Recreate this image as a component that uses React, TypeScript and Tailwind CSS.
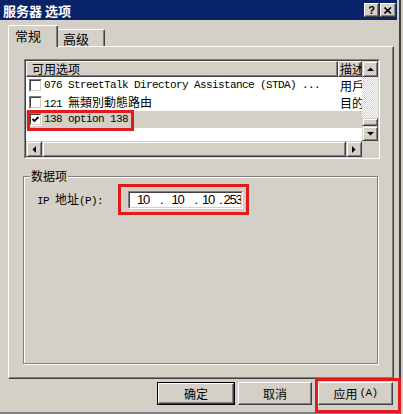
import React from "react";

// classic win32 bevels
const raised =
  "border border-t-white border-l-white border-r-[#404040] border-b-[#404040] shadow-[inset_-1px_-1px_0_#808080]";
const scrollBtn =
  "flex items-center justify-center bg-[#d4d0c8] border border-t-[#d4d0c8] border-l-[#d4d0c8] border-r-[#404040] border-b-[#404040] shadow-[inset_1px_1px_0_#ffffff,inset_-1px_-1px_0_#808080]";
const hatch =
  "bg-[image:repeating-conic-gradient(#ffffff_0%_25%,#d4d0c8_0%_50%)] bg-[length:2px_2px]";
const mono = "font-['Liberation_Mono',monospace] text-[11px] tracking-[-0.6px]";
const han = "font-['Noto_Sans_CJK_TC','Noto_Sans_CJK_SC',sans-serif] text-[12px] tracking-normal";

function Arrow({ dir }: { dir: "up" | "down" | "left" | "right" }) {
  const pts = {
    up: "0,4 7,4 3.5,0.5",
    down: "0,0 7,0 3.5,3.5",
    left: "4,0 4,7 0.5,3.5",
    right: "0,0 0,7 3.5,3.5",
  }[dir];
  const vertical = dir === "up" || dir === "down";
  return (
    <svg width={vertical ? 7 : 4} height={vertical ? 4 : 7} viewBox={vertical ? "0 0 7 4" : "0 0 4 7"}>
      <polygon points={pts} fill="#000" />
    </svg>
  );
}

function Check({ on }: { on?: boolean }) {
  return (
    <div className="h-[13px] w-[13px] shrink-0 border border-t-[#808080] border-l-[#808080] border-r-white border-b-white">
      <div className="h-full w-full border border-t-[#404040] border-l-[#404040] border-r-[#d4d0c8] border-b-[#d4d0c8] bg-white">
        {on && (
          <svg width="9" height="9" viewBox="0 0 9 9">
            <polyline points="1.5,4 3.5,6 7.5,2" fill="none" stroke="#000" strokeWidth="1.8" />
          </svg>
        )}
      </div>
    </div>
  );
}

const ROWS = [
  { code: "076 StreetTalk Directory Assistance (STDA) ...", desc: "用戶類別", sel: false },
  { code: "121 ", cjk: "無類別動態路由", desc: "目的地", sel: false },
  { code: "138 option 138", desc: "", sel: true, on: true },
];

export default function App() {
  return (
    <div className="h-[414px] w-[403px] bg-[#d4d0c8] pr-[2px] font-['Noto_Sans_CJK_SC',sans-serif] text-[12px] text-black">
      <div className="relative flex h-full w-[401px] flex-col border-r-2 border-b-2 border-r-[#404040] border-b-[#808080]">
        {/* title bar */}
        <div className="mr-[2px] flex h-[20px] shrink-0 items-center justify-between bg-[#0a246a] pl-[3px] pr-[1px]">
          <span className="text-[13px] font-bold leading-none text-white">服务器 选项</span>
          <div className="flex gap-[1px]">
            <div className={`${raised} flex h-[14px] w-[15px] items-center justify-center bg-[#d4d0c8] font-['Liberation_Sans',sans-serif] text-[11px] font-bold leading-none`}>
              ?
            </div>
            <div className={`${raised} flex h-[14px] w-[16px] items-center justify-center bg-[#d4d0c8]`}>
              <svg width="8" height="7" viewBox="0 0 8 7">
                <path d="M0.5 0.5 L7 6.5 M7 0.5 L0.5 6.5" stroke="#000" strokeWidth="1.6" />
              </svg>
            </div>
          </div>
        </div>

        <div className="flex flex-1 flex-col pl-[8px] pr-[5px] pt-[5px]">
          {/* tabs */}
          <div className="relative z-10 flex h-[21px] items-end">
            <div className="-mb-px h-[22px] w-[50px] rounded-t-[2px] border-t border-l border-r border-t-white border-l-white border-r-[#404040] bg-[#d4d0c8] pl-[6px] pt-[2px] text-[13px] leading-[16px] shadow-[inset_-1px_0_0_#808080]">
              常规
            </div>
            <div className="h-[17px] w-[47px] rounded-tr-[2px] border-t border-r border-t-white border-r-[#404040] pl-[5px] pt-[1px] text-[13px] leading-[16px] shadow-[inset_-1px_0_0_#808080]">
              高级
            </div>
          </div>

          {/* tab page */}
          <div className={`${raised} h-[333px] pl-[15px] pt-[12px]`}>
            {/* list view */}
            <div className="h-[100px] w-[356px] border border-t-[#808080] border-l-[#808080] border-r-white border-b-white">
              <div className="h-full w-full border border-t-[#404040] border-l-[#404040] border-r-[#d4d0c8] border-b-[#d4d0c8]">
                <div className="relative grid h-full grid-cols-[336px_16px] grid-rows-[80px_16px] bg-white">
                  <div className="flex flex-col overflow-hidden">
                    <div className="flex h-[16px] shrink-0">
                      <div className={`${raised} w-[312px] bg-[#d4d0c8] pl-[5px] leading-[14px]`}>可用选项</div>
                      <div className={`${raised} w-[24px] overflow-hidden whitespace-nowrap bg-[#d4d0c8] pl-[1px] leading-[14px]`}>
                        描述
                      </div>
                    </div>
                    {ROWS.map((r) => (
                      <div key={r.code} className={`flex h-[17px] shrink-0 items-center ${r.sel ? "bg-[#d4d0c8]" : ""}`}>
                        <div className="flex w-[312px] items-center pl-[3px]">
                          <Check on={r.on} />
                          <span className={`ml-[2px] whitespace-nowrap ${mono}`}>
                            {r.code}
                            {r.cjk && <span className={han}>{r.cjk}</span>}
                          </span>
                        </div>
                        <div className="w-[24px] overflow-hidden whitespace-nowrap pl-[2px] leading-[17px]">{r.desc}</div>
                      </div>
                    ))}
                  </div>

                  {/* vertical scrollbar */}
                  <div className="flex flex-col">
                    <div className={`${scrollBtn} h-[16px]`}>
                      <Arrow dir="up" />
                    </div>
                    <div className={`${hatch} h-[41px]`} />
                    <div className={`${scrollBtn} h-[8px]`} />
                    <div className={`${scrollBtn} h-[15px]`}>
                      <Arrow dir="down" />
                    </div>
                  </div>

                  {/* horizontal scrollbar */}
                  <div className="flex">
                    <div className={`${scrollBtn} w-[16px]`}>
                      <Arrow dir="left" />
                    </div>
                    <div className={`${scrollBtn} flex-1`} />
                    <div className={`${scrollBtn} w-[16px]`}>
                      <Arrow dir="right" />
                    </div>
                  </div>
                  <div className="bg-[#d4d0c8]" />

                  {/* annotation */}
                  <div className="absolute left-[1px] top-[49px] h-[21px] w-[107px] border-[3px] border-[#e01b1b]" />
                </div>
              </div>
            </div>

            {/* group box */}
            <div className="relative -ml-px mt-[17px] h-[188px] w-[355px] border border-[#808080] pl-[13px] pt-[7px] shadow-[inset_1px_1px_0_#ffffff,1px_1px_0_#ffffff]">
              <span className="absolute -top-[9px] left-[6px] bg-[#d4d0c8] px-[1px] leading-[16px]">数据项</span>
              <div className="flex items-center">
                <span className={`w-[81px] whitespace-nowrap ${mono}`}>
                  IP <span className={han}>地址</span>(P):
                </span>
                <div className="border-[3px] border-[#e01b1b] pb-[3px] pl-[7px] pr-[3px] pt-[4px]">
                  <div className="h-[18px] w-[115px] border border-t-[#808080] border-l-[#808080] border-r-white border-b-white">
                    <div className="flex h-full items-center overflow-hidden border border-t-[#404040] border-l-[#404040] border-r-[#d4d0c8] border-b-[#d4d0c8] bg-white font-['Liberation_Sans',sans-serif] text-[13px] leading-[14px] tracking-[-1.2px]">
                      <span className="ml-[7px]">10</span>
                      <span className="ml-[11px]">.</span>
                      <span className="ml-[9px]">10</span>
                      <span className="ml-[11px]">.</span>
                      <span className="ml-[5px]">10</span>
                      <span className="ml-[5px]">.</span>
                      <span className="ml-[2px]">253</span>
                      <span className="ml-[1px] h-[13px] w-px shrink-0 bg-black" />
                    </div>
                  </div>
                </div>
              </div>
            </div>
          </div>

          {/* buttons */}
          <div className="mt-[3px] flex justify-end pr-px">
            <div className="h-[23px] w-[78px] border border-black">
              <div className={`${raised} flex h-full items-center justify-center`}>确定</div>
            </div>
            <div className={`${raised} ml-[3px] flex h-[23px] w-[74px] items-center justify-center`}>取消</div>
            <div className={`${raised} ml-[6px] flex h-[23px] w-[75px] items-center justify-center`}>
              应用<span className={`ml-[2px] ${mono}`}>(A)</span>
            </div>
          </div>
        </div>

        {/* annotation */}
        <div className="absolute left-[315px] top-[378px] h-[35px] w-[86px] border-[3px] border-[#e01b1b]" />
      </div>
    </div>
  );
}
